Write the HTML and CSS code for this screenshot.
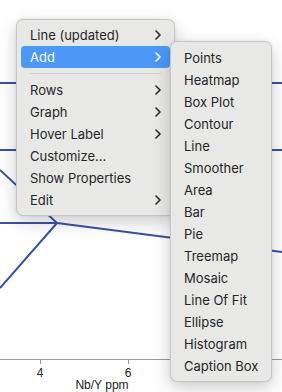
FILE: index.html
```html
<!DOCTYPE html>
<html lang="en">
<head>
  <meta charset="UTF-8">
  <title>Graph context menu</title>
  <link rel="stylesheet" href="styles.css">
</head>
<body>

  <div class="chart">
    <svg width="282" height="392" viewBox="0 0 282 392">
      <g class="series">
        <line x1="0" y1="83" x2="282" y2="83"/>
        <line x1="0" y1="150" x2="282" y2="150"/>
        <polyline points="0,170 57,223 0,288"/>
        <line x1="0" y1="223" x2="57" y2="223"/>
        <line x1="57" y1="223" x2="282" y2="252"/>
      </g>
      <g class="axis">
        <line x1="0" y1="359.5" x2="282" y2="359.5"/>
        <line x1="40.5" y1="359" x2="40.5" y2="364"/>
        <line x1="128.5" y1="359" x2="128.5" y2="364"/>
      </g>
      <text class="tick" x="40" y="377">4</text>
      <text class="tick" x="128" y="377">6</text>
      <text class="title" x="102" y="389">Nb/Y ppm</text>
    </svg>
  </div>

  <div class="menu main-menu">
    <div class="item">Line (updated)<svg class="chev" width="6" height="10"><polyline points="1,1 5,5 1,9"/></svg></div>
    <div class="item active">Add<svg class="chev" width="6" height="10"><polyline points="1,1 5,5 1,9"/></svg></div>
    <div class="sep"></div>
    <div class="item">Rows<svg class="chev" width="6" height="10"><polyline points="1,1 5,5 1,9"/></svg></div>
    <div class="item">Graph<svg class="chev" width="6" height="10"><polyline points="1,1 5,5 1,9"/></svg></div>
    <div class="item">Hover Label<svg class="chev" width="6" height="10"><polyline points="1,1 5,5 1,9"/></svg></div>
    <div class="item">Customize...</div>
    <div class="item">Show Properties</div>
    <div class="item">Edit<svg class="chev" width="6" height="10"><polyline points="1,1 5,5 1,9"/></svg></div>
  </div>

  <div class="menu sub-menu">
    <div class="item">Points</div>
    <div class="item">Heatmap</div>
    <div class="item">Box Plot</div>
    <div class="item">Contour</div>
    <div class="item">Line</div>
    <div class="item">Smoother</div>
    <div class="item">Area</div>
    <div class="item">Bar</div>
    <div class="item">Pie</div>
    <div class="item">Treemap</div>
    <div class="item">Mosaic</div>
    <div class="item">Line Of Fit</div>
    <div class="item">Ellipse</div>
    <div class="item">Histogram</div>
    <div class="item">Caption Box</div>
  </div>

</body>
</html>
```

FILE: styles.css
```css
body {
  margin: 0;
  width: 282px;
  height: 392px;
  position: relative;
  overflow: hidden;
  background-color: #fff;
  font-family: 'Inter', 'Liberation Sans', sans-serif;
  color: #262626;
}
.chart svg {
  display: block;
}
.series line, .series polyline {
  stroke: #3853a6;
  stroke-width: 2;
  fill: none;
}
.axis line {
  stroke: #9a9a9a;
  stroke-width: 1;
}
.tick, .title {
  font-family: 'Liberation Sans', sans-serif;
  font-size: 12px;
  fill: #222;
  text-anchor: middle;
}
.menu {
  position: absolute;
  box-sizing: border-box;
  padding: 4px 4px;
  background-color: #e8e8e6;
  border: 1px solid rgba(0, 0, 0, 0.14);
  border-radius: 7px;
  box-shadow: 0 6px 18px rgba(0, 0, 0, 0.2), 0 0 3px rgba(0, 0, 0, 0.08);
}
.main-menu {
  left: 16px;
  top: 19px;
  width: 159px;
}
.sub-menu {
  left: 170px;
  top: 41px;
  width: 102px;
  padding-top: 5px;
}
.item {
  height: 22px;
  padding: 0 9px;
  display: flex;
  align-items: center;
  justify-content: space-between;
  font-size: 13px;
  border-radius: 4px;
  white-space: nowrap;
}
.item.active {
  background-color: #4b98f6;
  color: #fff;
}
.chev polyline {
  fill: none;
  stroke: #2a2a2a;
  stroke-width: 1.6;
  stroke-linecap: round;
  stroke-linejoin: round;
}
.item.active .chev polyline {
  stroke: #fff;
}
.sep {
  height: 11px;
  margin: 0 9px;
  display: flex;
  align-items: center;
}
.sep::after {
  content: '';
  flex: 1;
  height: 1px;
  background-color: #cfcfcd;
}
```
